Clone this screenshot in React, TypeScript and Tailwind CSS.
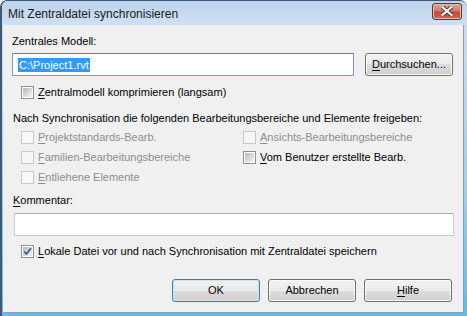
import React from 'react';

const font = { fontFamily: '"Liberation Sans", Arial, sans-serif' };

interface CheckProps {
  label: React.ReactNode;
  checked?: boolean;
  disabled?: boolean;
}

const CheckBox: React.FC<CheckProps> = ({ label, checked, disabled }) => (
  <div className="flex items-center h-[13px] gap-[4px]">
    <span
      className={`w-[13px] h-[13px] shrink-0 border flex items-center justify-center ${
        disabled ? 'border-[#c8c8c8] bg-[#f7f7f7]' : 'border-[#8e8f8f] bg-white'
      }`}
    >
      {!disabled && (
        <span className="w-[9px] h-[9px] bg-[linear-gradient(135deg,#b4b8bd_0%,#dcdee0_60%,#f3f3f3_100%)] flex items-center justify-center relative">
          {checked && (
            <svg width="9" height="9" viewBox="0 0 9 9" className="absolute inset-0">
              <path d="M1 4.5 L3.4 7 L8 1.2" fill="none" stroke="#3f5a8e" strokeWidth="1.7" />
            </svg>
          )}
        </span>
      )}
    </span>
    <span className={`text-[11px] leading-[13px] whitespace-nowrap ${disabled ? 'text-[#8d8d8d]' : 'text-black'}`}>{label}</span>
  </div>
);

const Btn: React.FC<{ children: React.ReactNode; primary?: boolean }> = ({ children, primary }) => (
  <button
    className={`w-[88px] h-[23px] rounded-[3px] border text-[11px] text-black flex items-center justify-center bg-[linear-gradient(#f2f2f2_0%,#ebebeb_50%,#dddddd_50%,#cfcfcf_100%)] ${
      primary
        ? 'border-[#3c7fb1] shadow-[inset_0_0_0_1px_#c7e6f6]'
        : 'border-[#707070] shadow-[inset_0_0_0_1px_#fbfbfb]'
    }`}
  >
    {children}
  </button>
);

const U: React.FC<{ children: React.ReactNode }> = ({ children }) => (
  <span className="underline underline-offset-[2px] decoration-[1px]">{children}</span>
);

export default function App() {
  return (
    <div
      className="w-[467px] h-[316px] flex flex-col rounded-t-[7px] overflow-hidden border-t border-l-2 border-[#3f5a78] bg-[linear-gradient(#bdd3ea_0%,#cadcf0_10%,#9fcfea_60%,#55c0ea_100%)]"
      style={font}
    >
      {/* title bar */}
      <div className="h-[24px] shrink-0 flex items-center pl-[6px] pr-[4px] bg-[linear-gradient(#bcd2ea,#cfe0f2)]">
        <span className="text-[12px] text-[#1a1a1a] flex-1 pt-[2px]">Mit Zentraldatei synchronisieren</span>
        <div className="w-[30px] h-[17px] mt-[-4px] mr-[1px] rounded-[3px] border border-[#6e2f2f] bg-[linear-gradient(#e4a69c_0%,#d27b6e_45%,#c3493a_55%,#cf6a55_100%)] flex items-center justify-center shadow-[inset_0_0_0_1px_#eab7ae]">
          <svg width="12" height="10" viewBox="0 0 12 10">
            <path d="M1.5 1 L10.5 9 M10.5 1 L1.5 9" stroke="#4a2a2a" strokeWidth="4" strokeLinecap="square" />
            <path d="M1.5 1 L10.5 9 M10.5 1 L1.5 9" stroke="#ffffff" strokeWidth="2.2" strokeLinecap="square" />
          </svg>
        </div>
      </div>

      {/* client area */}
      <div className="flex-1 ml-[1px] mr-[3px] mb-[3px] bg-[#f0f0f0] border-r border-b border-[#8aa0b6] flex flex-col pl-[9px] pt-[10px]">
        <div className="text-[11px] leading-[13px] text-black">Zentrales Modell:</div>

        <div className="flex items-center mt-[5px] gap-[11px]">
          <div className="w-[342px] h-[23px] border border-[#7a9cc7] border-t-[#5e7fa8] bg-white flex items-center pl-[5px]">
            <span className="text-[11px] leading-[14px] px-[1px] bg-[#3399ff] text-white">C:\Project1.rvt</span>
          </div>
          <Btn>
            <span>
              <U>D</U>urchsuchen...
            </span>
          </Btn>
        </div>

        <div className="mt-[10px] pl-[9px]">
          <CheckBox label={<><U>Z</U>entralmodell komprimieren (langsam)</>} />
        </div>

        <div className="mt-[13px] text-[11px] leading-[13px] text-black pl-[1px]">
          Nach Synchronisation die folgenden Bearbeitungsbereiche und Elemente freigeben:
        </div>

        <div className="mt-[6px] pl-[9px] grid grid-cols-[222px_1fr] gap-y-[7px]">
          <CheckBox disabled label={<><U>P</U>rojektstandards-Bearb.</>} />
          <CheckBox disabled label={<><U>A</U>nsichts-Bearbeitungsbereiche</>} />
          <CheckBox disabled label={<><U>F</U>amilien-Bearbeitungsbereiche</>} />
          <CheckBox label={<><U>V</U>om Benutzer erstellte Bearb.</>} />
          <CheckBox disabled label={<><U>E</U>ntliehene Elemente</>} />
        </div>

        <div className="mt-[10px] text-[11px] leading-[13px] text-black pl-[1px]">
          <U>K</U>ommentar:
        </div>

        <div className="mt-[6px] ml-[2px] w-[440px] h-[23px] border border-[#c9ced6] border-t-[#abadb3] bg-white" />

        <div className="mt-[9px] pl-[9px]">
          <CheckBox checked label={<><U>L</U>okale Datei vor und nach Synchronisation mit Zentraldatei speichern</>} />
        </div>

        <div className="mt-[21px] flex gap-[8px] pl-[160px]">
          <Btn primary>OK</Btn>
          <Btn>Abbrechen</Btn>
          <Btn>
            <span>
              <U>H</U>ilfe
            </span>
          </Btn>
        </div>
      </div>
    </div>
  );
}
